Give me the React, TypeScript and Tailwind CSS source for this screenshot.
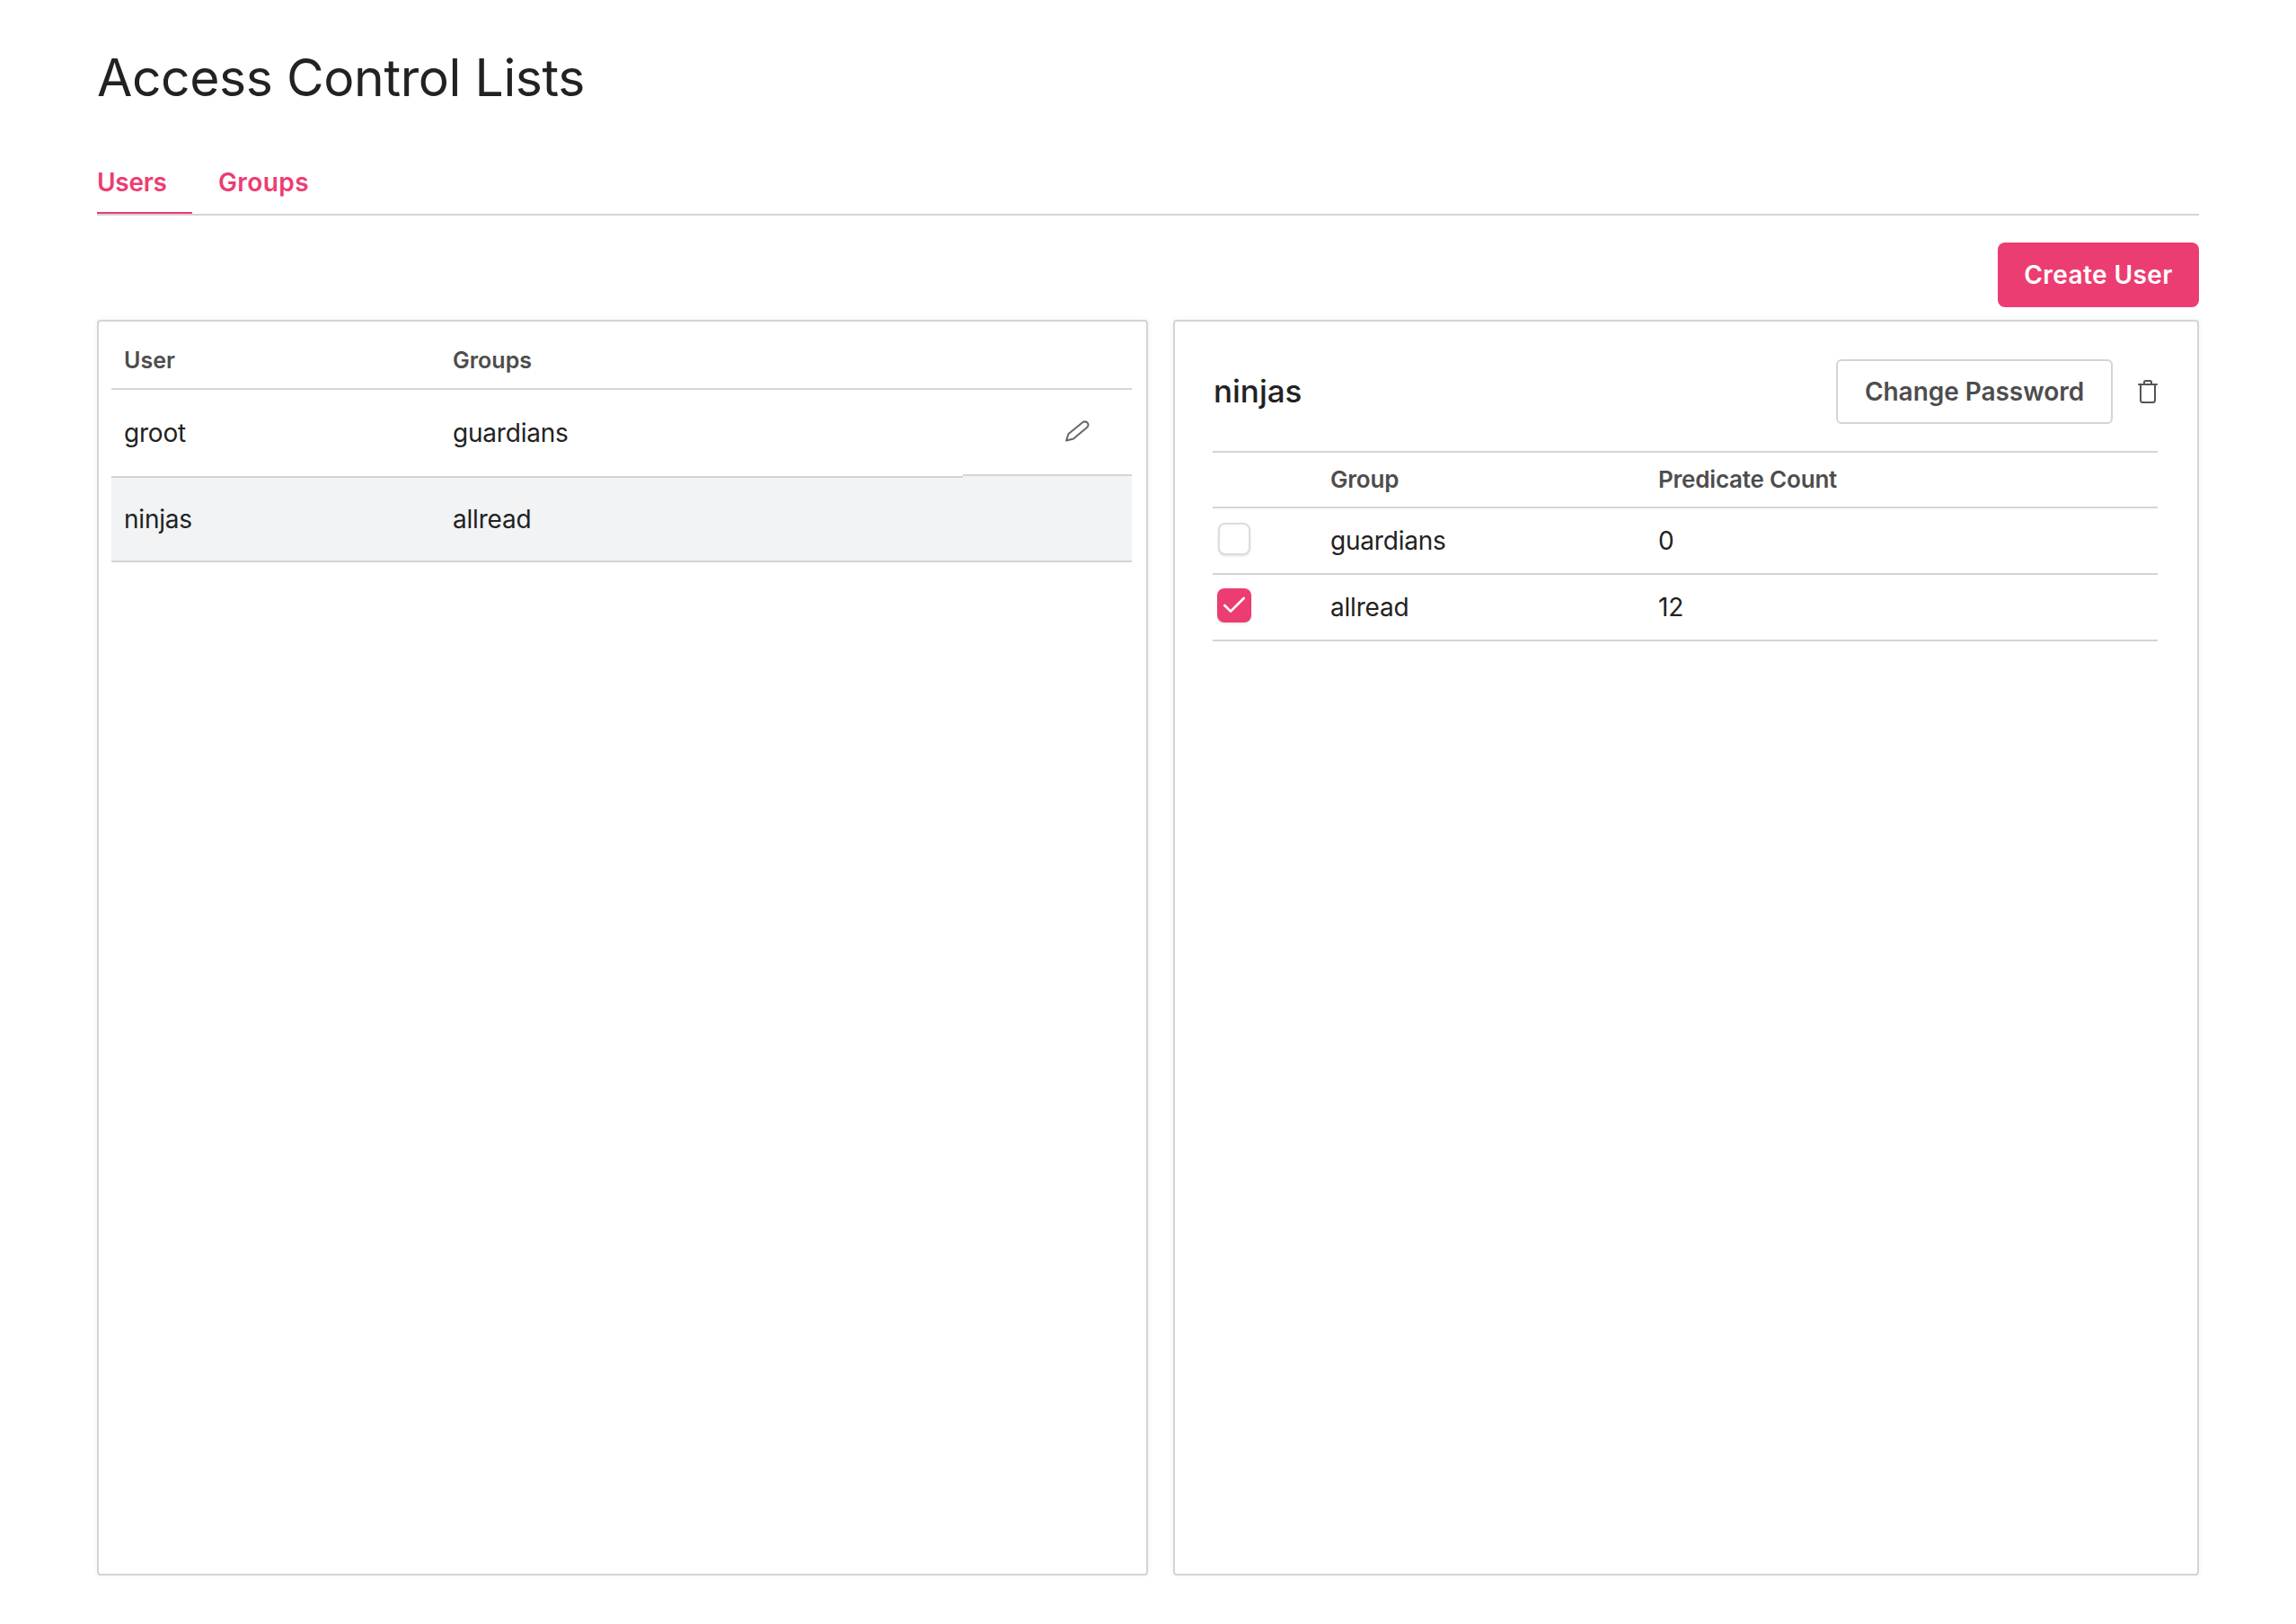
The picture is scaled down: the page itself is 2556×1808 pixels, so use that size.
import { Check } from "lucide-react";

const font = "font-['Inter','Noto_Sans',sans-serif]";

const users = [
  { name: "groot", groups: "guardians" },
  { name: "ninjas", groups: "allread" },
];

const groups = [
  { name: "guardians", count: 0, checked: false },
  { name: "allread", count: 12, checked: true },
];

function PencilIcon() {
  return (
    <svg width="28" height="24" viewBox="0 0 28 24" fill="none" stroke="#666666" strokeWidth="2" strokeLinejoin="round">
      <path d="M1 22.5 L3.5 15 L19.5 2 Q22 0.5 24.5 2.5 Q26.5 5 24.5 7.5 L9 20.5 Z" />
    </svg>
  );
}

function TrashIcon() {
  return (
    <svg width="22" height="26" viewBox="0 0 22 26" fill="none" stroke="#555555" strokeWidth="2" strokeLinecap="round">
      <path d="M7 4 V2.5 Q7 1 8.5 1 H13.5 Q15 1 15 2.5 V4" />
      <path d="M1 5 H21" />
      <path d="M3 5 V22.5 Q3 25 5.5 25 H16.5 Q19 25 19 22.5 V5" />
    </svg>
  );
}

function UserTable() {
  return (
    <div className="h-[1398px] rounded border-2 border-[#d4d4d4] bg-white pr-[16px] pl-[14px] shadow-[0_0_6px_rgba(0,0,0,0.06)]">
      <div className="flex h-[76px] items-center border-b-2 border-[#d4d4d4] pt-[14px] text-[25px] font-semibold text-[#4d4d4d]">
        <div className="w-[380px] pl-[14px]">User</div>
        <div>Groups</div>
      </div>

      {/* the action cell's border sits 2px above the others */}
      <div className="flex text-[28px] tracking-[-0.2px] text-[#222222]">
        <div className="flex h-[98px] w-[380px] items-center border-b-2 border-[#d4d4d4] pl-[14px]">{users[0].name}</div>
        <div className="flex h-[98px] flex-1 items-center border-b-2 border-[#d4d4d4]">{users[0].groups}</div>
        <div className="w-[188px] bg-[#f2f3f5]">
          <div className="flex h-[96px] items-center border-b-2 border-[#d4d4d4] bg-white pb-[3px] pl-[114px]">
            <PencilIcon />
          </div>
        </div>
      </div>

      <div className="flex h-[94px] items-center border-b-2 border-[#d4d4d4] bg-[#f2f3f5] text-[28px] tracking-[-0.2px] text-[#222222]">
        <div className="w-[380px] pl-[14px]">{users[1].name}</div>
        <div>{users[1].groups}</div>
      </div>
    </div>
  );
}

function UserDetail() {
  return (
    <div className="h-[1398px] rounded border-2 border-[#d4d4d4] bg-white pr-[44px] pl-[42px] shadow-[0_0_6px_rgba(0,0,0,0.06)]">
      <div className="flex h-[146px] items-center justify-between border-b-2 border-[#d4d4d4] pt-[42px] pb-[30px]">
        <div className="pb-[2px] pl-[1px] text-[35px] font-medium tracking-[0px] text-[#222222]">ninjas</div>
        <div className="flex items-center gap-[28px]">
          <button className="flex h-[72px] w-[308px] items-center justify-center rounded-md border-2 border-[#d4d4d4] bg-white text-[28px] font-semibold tracking-[-0.05px] text-[#4d4d4d]">
            Change Password
          </button>
          <TrashIcon />
        </div>
      </div>

      <div className="flex h-[62px] items-center border-b-2 border-[#d4d4d4] pb-[2px] text-[26px] font-semibold tracking-[-0.2px] text-[#4d4d4d]">
        <div className="w-[131px]" />
        <div className="w-[365px]">Group</div>
        <div>Predicate Count</div>
      </div>

      {groups.map((g) => (
        <div key={g.name} className="flex h-[74px] items-center border-b-2 border-[#d4d4d4] text-[28px] tracking-[-0.2px] text-[#222222]">
          <div className="w-[131px] pl-[5px]">
            {g.checked ? (
              <div className="mb-[4px] flex h-[38px] w-[38px] items-center justify-center rounded-lg bg-[#ec3d72] shadow-sm">
                <Check className="h-[32px] w-[32px] text-white" strokeWidth={2} />
              </div>
            ) : (
              <div className="mb-[4px] ml-[1px] h-[36px] w-[36px] rounded-lg border-2 border-[#dddddd] bg-white shadow-sm" />
            )}
          </div>
          <div className="w-[365px]">{g.name}</div>
          <div>{g.count}</div>
        </div>
      ))}
    </div>
  );
}

export default function App() {
  return (
    <div className={`min-h-screen bg-white px-[108px] pt-[51px] ${font}`}>
      <h1 className="text-[57px] font-normal leading-[72px] tracking-[-0.4px] text-[#222222]">Access Control Lists</h1>

      <div className="mt-[39px] flex h-[78px] border-b-2 border-[#d4d4d4] text-[28px] font-semibold text-[#ec3d72]">
        <div className="h-[76px] w-[106px] border-b-2 border-[#ec3d72] pt-[20px] tracking-[-0.3px]">Users</div>
        <div className="ml-[29px] pt-[20px] tracking-[0.4px]">Groups</div>
      </div>

      <div className="mt-[30px] flex justify-end">
        <button className="h-[72px] w-[224px] rounded-lg bg-[#ec3d72] text-[28px] font-semibold tracking-[0.4px] text-white">
          Create User
        </button>
      </div>

      <div className="mt-[14px] grid grid-cols-[1170px_1142px] gap-[28px]">
        <UserTable />
        <UserDetail />
      </div>
    </div>
  );
}
